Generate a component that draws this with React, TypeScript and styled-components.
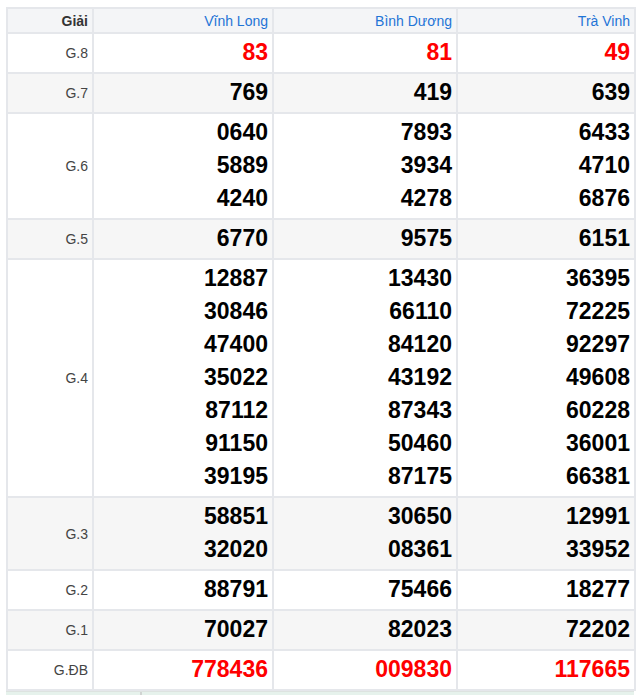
import React from "react";
import styled, { createGlobalStyle } from "styled-components";

const Global = createGlobalStyle`
  html, body { margin: 0; padding: 0; background: #fff; }
  body { padding: 7px 6px 0 6px; font-family: "Liberation Sans", Arial, sans-serif; }
`;

const Table = styled.table`
  border-collapse: collapse;
  width: 628px;
  table-layout: fixed;
  font-family: "Liberation Sans", Arial, sans-serif;
`;

const Row = styled.tr<{ $alt?: boolean }>`
  background: ${(p) => (p.$alt ? "#f6f6f6" : "#ffffff")};
`;

const HeadRow = styled.tr`
  background: #f4f5f7;
`;

const HeadCell = styled.th<{ $city?: boolean }>`
  border: 2px solid #e5e7eb;
  padding: 0 4px;
  height: 23px;
  text-align: right;
  font-size: 14px;
  font-weight: ${(p) => (p.$city ? 400 : 700)};
  color: ${(p) => (p.$city ? "#1f74d6" : "#333")};
`;

const PrizeCell = styled.td`
  border: 2px solid #e5e7eb;
  padding: 0 4px;
  text-align: right;
  vertical-align: middle;
  font-size: 14px;
  color: #444;
`;

const NumCell = styled.td`
  border: 2px solid #e5e7eb;
  padding: 2px 4px 3px;
  text-align: right;
  vertical-align: middle;
`;

const Num = styled.div<{ $red?: boolean }>`
  font-size: 23px;
  line-height: 33px;
  font-weight: 700;
  color: ${(p) => (p.$red ? "#ff0000" : "#000")};
`;

const Footer = styled.div`
  display: grid;
  grid-template-columns: 136px 1fr;
  width: 628px;
  height: 6px;
  background: #e6f2ec;
  border-top: 1px solid #dde3e0;
`;

const FooterCol = styled.div`
  border-right: 2px solid #d0d4d2;
`;

type Prize = { label: string; alt: boolean; red?: boolean; vals: string[][] };

const prizes: Prize[] = [
  { label: "G.8", alt: false, red: true, vals: [["83"], ["81"], ["49"]] },
  { label: "G.7", alt: true, vals: [["769"], ["419"], ["639"]] },
  {
    label: "G.6",
    alt: false,
    vals: [
      ["0640", "5889", "4240"],
      ["7893", "3934", "4278"],
      ["6433", "4710", "6876"],
    ],
  },
  { label: "G.5", alt: true, vals: [["6770"], ["9575"], ["6151"]] },
  {
    label: "G.4",
    alt: false,
    vals: [
      ["12887", "30846", "47400", "35022", "87112", "91150", "39195"],
      ["13430", "66110", "84120", "43192", "87343", "50460", "87175"],
      ["36395", "72225", "92297", "49608", "60228", "36001", "66381"],
    ],
  },
  {
    label: "G.3",
    alt: true,
    vals: [
      ["58851", "32020"],
      ["30650", "08361"],
      ["12991", "33952"],
    ],
  },
  { label: "G.2", alt: false, vals: [["88791"], ["75466"], ["18277"]] },
  { label: "G.1", alt: true, vals: [["70027"], ["82023"], ["72202"]] },
  { label: "G.ĐB", alt: false, red: true, vals: [["778436"], ["009830"], ["117665"]] },
];

export default function App() {
  return (
    <>
      <Global />
      <Table>
        <colgroup>
          <col style={{ width: 86 }} />
          <col style={{ width: 180 }} />
          <col style={{ width: 184 }} />
          <col style={{ width: 178 }} />
        </colgroup>
        <thead>
          <HeadRow>
            <HeadCell>Giải</HeadCell>
            <HeadCell $city>Vĩnh Long</HeadCell>
            <HeadCell $city>Bình Dương</HeadCell>
            <HeadCell $city>Trà Vinh</HeadCell>
          </HeadRow>
        </thead>
        <tbody>
          {prizes.map((p) => (
            <Row key={p.label} $alt={p.alt}>
              <PrizeCell>{p.label}</PrizeCell>
              {p.vals.map((col, i) => (
                <NumCell key={i}>
                  {col.map((v) => (
                    <Num key={v} $red={p.red}>
                      {v}
                    </Num>
                  ))}
                </NumCell>
              ))}
            </Row>
          ))}
        </tbody>
      </Table>
      <Footer>
        <FooterCol />
        <div />
      </Footer>
    </>
  );
}
